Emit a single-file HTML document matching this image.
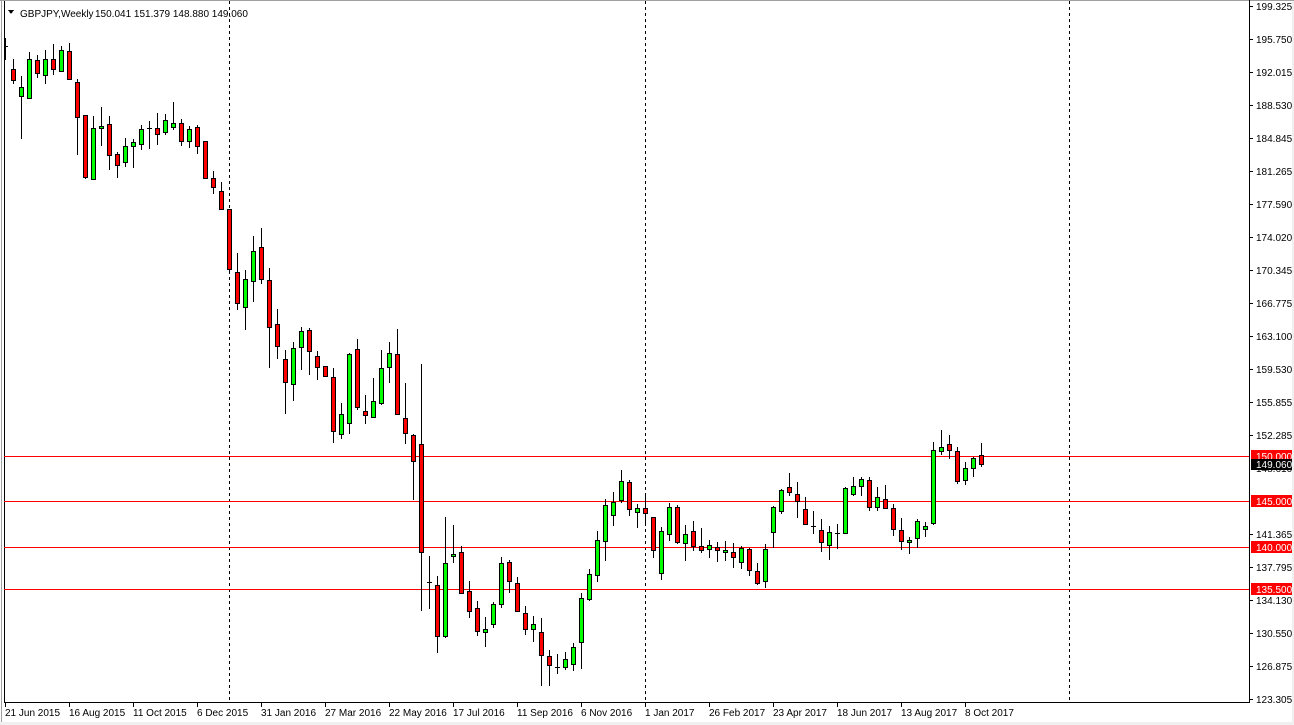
<!DOCTYPE html>
<html><head><meta charset="utf-8"><style>
html,body{margin:0;padding:0;background:#fff;}
body{width:1294px;height:725px;overflow:hidden;position:relative;font-family:"Liberation Sans",sans-serif;}
svg{position:absolute;left:0;top:0;}
text{font-family:"Liberation Sans",sans-serif;font-size:10px;fill:#000;}
</style></head><body>
<svg id="s" width="1294" height="725" viewBox="0 0 1294 725" xmlns="http://www.w3.org/2000/svg" shape-rendering="crispEdges">
<rect x="0" y="0" width="1294" height="725" fill="#fff"/>
<rect x="0" y="722" width="1294" height="3" fill="#f0f0f0"/>
<rect x="1292" y="0" width="2" height="725" fill="#f0f0f0"/>
<line x1="1.5" y1="0" x2="1.5" y2="722" stroke="#a0a0a0"/>
<line x1="4.5" y1="0" x2="4.5" y2="702" stroke="#000"/>
<line x1="0" y1="0.5" x2="1294" y2="0.5" stroke="#a0a0a0"/>
<line x1="4" y1="702.5" x2="1249" y2="702.5" stroke="#000"/>
<line x1="1249.5" y1="0" x2="1249.5" y2="703" stroke="#000"/>
<g stroke="#000" stroke-dasharray="3,3">
<line x1="229.5" y1="1" x2="229.5" y2="702"/>
<line x1="645.5" y1="1" x2="645.5" y2="702"/>
<line x1="1069.5" y1="1" x2="1069.5" y2="702"/>
</g>
<g stroke="#ff0000">
<line x1="4" y1="456.5" x2="1249" y2="456.5"/>
<line x1="4" y1="501.5" x2="1249" y2="501.5"/>
<line x1="4" y1="547.5" x2="1249" y2="547.5"/>
<line x1="4" y1="589.5" x2="1249" y2="589.5"/>
</g>
<g id="c"></g>
<g id="ax">
<text x="1256" y="10">199.325</text>
<text x="1256" y="43">195.750</text>
<text x="1256" y="76">192.015</text>
<text x="1256" y="109">188.530</text>
<text x="1256" y="142">184.845</text>
<text x="1256" y="175">181.265</text>
<text x="1256" y="208">177.590</text>
<text x="1256" y="241">174.020</text>
<text x="1256" y="274">170.345</text>
<text x="1256" y="307">166.775</text>
<text x="1256" y="340">163.100</text>
<text x="1256" y="373">159.530</text>
<text x="1256" y="406">155.855</text>
<text x="1256" y="439">152.285</text>
<text x="1256" y="472">148.610</text>
<text x="1256" y="538">141.365</text>
<text x="1256" y="571">137.795</text>
<text x="1256" y="604">134.130</text>
<text x="1256" y="637">130.550</text>
<text x="1256" y="670">126.875</text>
<text x="1256" y="703">123.305</text>
</g>
<g stroke="#000">
<line x1="1249" y1="6.5" x2="1253" y2="6.5"/><line x1="1249" y1="39.5" x2="1253" y2="39.5"/>
<line x1="1249" y1="72.5" x2="1253" y2="72.5"/><line x1="1249" y1="105.5" x2="1253" y2="105.5"/>
<line x1="1249" y1="138.5" x2="1253" y2="138.5"/><line x1="1249" y1="171.5" x2="1253" y2="171.5"/>
<line x1="1249" y1="204.5" x2="1253" y2="204.5"/><line x1="1249" y1="237.5" x2="1253" y2="237.5"/>
<line x1="1249" y1="270.5" x2="1253" y2="270.5"/><line x1="1249" y1="303.5" x2="1253" y2="303.5"/>
<line x1="1249" y1="336.5" x2="1253" y2="336.5"/><line x1="1249" y1="369.5" x2="1253" y2="369.5"/>
<line x1="1249" y1="402.5" x2="1253" y2="402.5"/><line x1="1249" y1="435.5" x2="1253" y2="435.5"/>
<line x1="1249" y1="534.5" x2="1253" y2="534.5"/><line x1="1249" y1="567.5" x2="1253" y2="567.5"/>
<line x1="1249" y1="600.5" x2="1253" y2="600.5"/><line x1="1249" y1="633.5" x2="1253" y2="633.5"/>
<line x1="1249" y1="666.5" x2="1253" y2="666.5"/><line x1="1249" y1="699.5" x2="1253" y2="699.5"/>
</g>
<rect x="1251" y="450" width="41" height="12" fill="#ff0000"/>
<text x="1256" y="460" style="fill:#fff">150.000</text>
<rect x="1251" y="459" width="41" height="11" fill="#000"/>
<text x="1256" y="468" style="fill:#fff">149.060</text>
<rect x="1251" y="495" width="41" height="12" fill="#ff0000"/>
<text x="1256" y="505" style="fill:#fff">145.000</text>
<rect x="1251" y="541" width="41" height="12" fill="#ff0000"/>
<text x="1256" y="551" style="fill:#fff">140.000</text>
<rect x="1251" y="583" width="41" height="12" fill="#ff0000"/>
<text x="1256" y="593" style="fill:#fff">135.500</text>
<g stroke="#000">
<line x1="5.5" y1="702" x2="5.5" y2="707"/><line x1="69.5" y1="702" x2="69.5" y2="707"/>
<line x1="133.5" y1="702" x2="133.5" y2="707"/><line x1="197.5" y1="702" x2="197.5" y2="707"/>
<line x1="261.5" y1="702" x2="261.5" y2="707"/><line x1="325.5" y1="702" x2="325.5" y2="707"/>
<line x1="389.5" y1="702" x2="389.5" y2="707"/><line x1="453.5" y1="702" x2="453.5" y2="707"/>
<line x1="517.5" y1="702" x2="517.5" y2="707"/><line x1="581.5" y1="702" x2="581.5" y2="707"/>
<line x1="645.5" y1="702" x2="645.5" y2="707"/><line x1="709.5" y1="702" x2="709.5" y2="707"/>
<line x1="773.5" y1="702" x2="773.5" y2="707"/><line x1="837.5" y1="702" x2="837.5" y2="707"/>
<line x1="901.5" y1="702" x2="901.5" y2="707"/><line x1="965.5" y1="702" x2="965.5" y2="707"/>
</g>
<text x="5" y="716">21 Jun 2015</text>
<text x="69" y="716">16 Aug 2015</text>
<text x="133" y="716">11 Oct 2015</text>
<text x="197" y="716">6 Dec 2015</text>
<text x="261" y="716">31 Jan 2016</text>
<text x="325" y="716">27 Mar 2016</text>
<text x="389" y="716">22 May 2016</text>
<text x="453" y="716">17 Jul 2016</text>
<text x="517" y="716">11 Sep 2016</text>
<text x="581" y="716">6 Nov 2016</text>
<text x="645" y="716">1 Jan 2017</text>
<text x="709" y="716">26 Feb 2017</text>
<text x="773" y="716">23 Apr 2017</text>
<text x="837" y="716">18 Jun 2017</text>
<text x="901" y="716">13 Aug 2017</text>
<text x="965" y="716">8 Oct 2017</text>
<path d="M8 10 L14 10 L11 14 Z" fill="#000"/>
<text x="20" y="17">GBPJPY,Weekly</text>
<text x="95" y="17">150.041 151.379 148.880 149.060</text>
</svg>
<script>
var d=[
[59,83,69,80,'r'],[76,138,87,96,'g'],[52,98,59,98,'g'],[55,77,60,73,'r'],[50,83,59,75,'g'],[44,74,59,69,'r'],[46,71,50,71,'g'],[43,79,51,79,'r'],
[79,154,82,117,'r'],[115,178,115,177,'r'],[116,179,128,179,'g'],[107,145,126,128,'g'],[116,169,124,155,'r'],[152,177,154,165,'r'],[138,166,146,162,'g'],[139,167,142,146,'g'],
[125,149,129,144,'g'],[121,148,128,128,'d'],[113,144,128,134,'r'],[114,134,120,132,'g'],[102,129,123,127,'g'],[119,145,123,141,'r'],[126,147,129,141,'g'],[125,153,127,146,'r'],
[141,178,141,178,'r'],[171,193,178,187,'r'],[182,209,191,209,'r'],[209,270,209,269,'r'],[253,309,272,303,'r'],[270,329,279,307,'g'],[236,301,251,281,'g'],[228,283,247,279,'r'],
[268,367,280,327,'r'],[309,358,324,346,'r'],[350,413,359,382,'r'],[342,400,348,384,'g'],[327,369,331,347,'g'],[328,374,330,351,'r'],[351,379,356,367,'r'],[366,376,366,376,'r'],
[368,442,377,431,'r'],[403,438,414,434,'g'],[353,433,354,423,'g'],[339,409,349,407,'r'],[395,423,411,415,'r'],[378,417,401,417,'g'],[350,404,368,403,'g'],[342,382,353,367,'g'],
[329,414,354,414,'r'],[383,443,418,433,'r'],[434,499,435,461,'r'],[364,610,444,552,'r'],[556,608,582,582,'d'],[576,652,585,636,'r'],[517,637,563,636,'g'],[525,562,554,556,'g'],
[546,593,552,593,'r'],[581,617,591,611,'r'],[601,635,608,631,'r'],[617,646,629,632,'g'],[602,627,604,624,'g'],[557,607,563,604,'g'],[560,592,562,581,'r'],[577,611,583,611,'r'],
[606,634,613,629,'r'],[616,641,624,629,'g'],[618,685,632,655,'r'],[650,685,656,665,'r'],[654,673,667,667,'d'],[652,669,659,667,'g'],[643,670,647,664,'g'],[593,668,598,642,'g'],
[569,600,574,599,'g'],[531,581,540,575,'g'],[499,560,505,541,'g'],[492,525,502,515,'g'],[470,502,481,500,'g'],[480,515,482,509,'r'],[504,527,508,512,'g'],[496,525,508,513,'r'],
[517,557,517,550,'r'],[527,579,531,573,'g'],[503,540,507,534,'g'],[505,543,507,542,'r'],[525,560,534,543,'g'],[521,550,531,546,'r'],[528,552,546,550,'r'],[540,557,545,549,'g'],
[542,561,547,550,'r'],[541,560,550,552,'g'],[543,567,552,557,'r'],[546,568,548,562,'g'],[548,575,549,570,'r'],[563,584,571,583,'r'],[544,587,549,581,'g'],[506,547,507,532,'g'],
[489,513,490,511,'g'],[473,495,487,492,'r'],[482,517,494,501,'r'],[497,524,509,524,'r'],[511,533,526,526,'d'],[519,551,530,542,'r'],[526,559,532,545,'g'],[524,548,533,533,'d'],
[487,533,488,533,'g'],[477,495,486,494,'g'],[477,495,479,486,'g'],[477,510,480,507,'r'],[487,510,497,507,'g'],[485,508,499,508,'r'],[504,535,508,529,'r'],[518,549,530,541,'r'],
[537,553,540,542,'g'],[519,547,521,538,'g'],[522,536,526,529,'g'],[442,524,450,523,'g'],[430,454,447,451,'g'],[435,458,444,450,'r'],[447,483,451,481,'r'],[462,484,468,480,'g'],
[457,476,458,468,'g'],[443,466,455,464,'r']];
var g=document.getElementById('c'),h='';
h+='<line x1="5.5" y1="38" x2="5.5" y2="60" stroke="#000"/><line x1="5" y1="46.5" x2="8" y2="46.5" stroke="#000"/>';
for(var i=0;i<d.length;i++){var x=13+8*i,c=d[i];
h+='<line x1="'+(x+0.5)+'" y1="'+c[0]+'" x2="'+(x+0.5)+'" y2="'+(c[1]+1)+'" stroke="#000"/>';
if(c[4]=='d'||c[3]-c[2]<1){h+='<line x1="'+(x-2)+'" y1="'+(c[2]+0.5)+'" x2="'+(x+3)+'" y2="'+(c[2]+0.5)+'" stroke="#000"/>';}
else{h+='<rect x="'+(x-1.5)+'" y="'+(c[2]+0.5)+'" width="4" height="'+(c[3]-c[2])+'" fill="'+(c[4]=='r'?'#ff0000':'#00ff00')+'" stroke="#000"/>';}}
g.innerHTML=h;
</script>
</body></html>
